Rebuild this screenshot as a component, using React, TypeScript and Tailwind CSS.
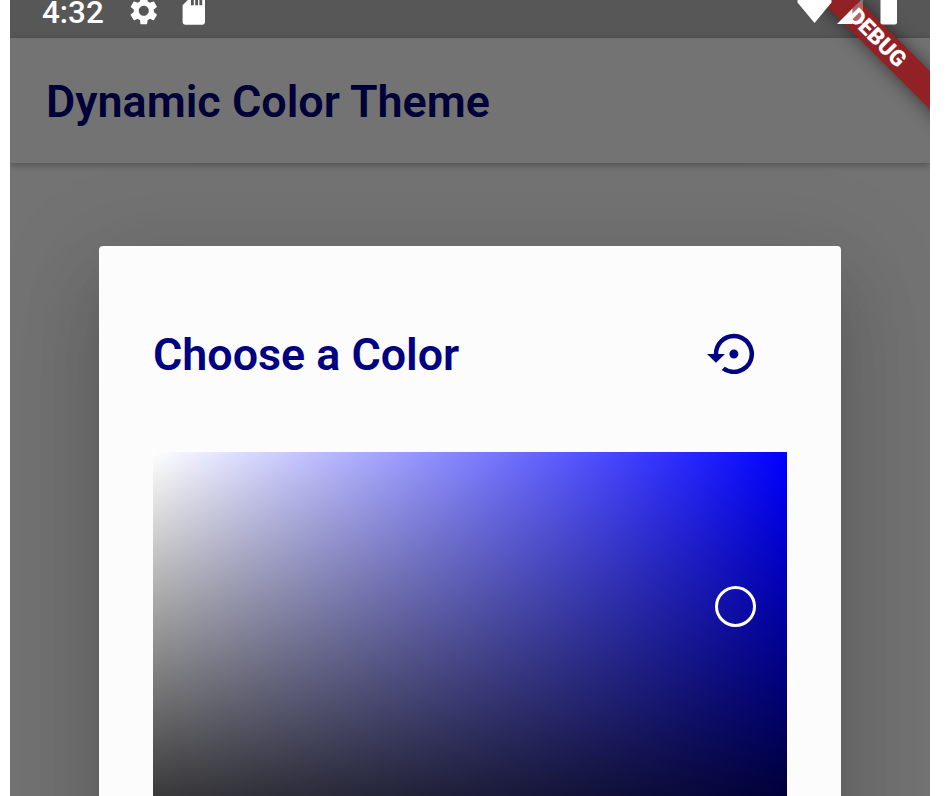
import { MdSdCard, MdSettings, MdSettingsBackupRestore } from "react-icons/md";

function StatusBar() {
  return (
    <div className="-mt-4 flex h-[54px] shrink-0 items-center bg-[#575757] text-white">
      <span className="ml-8 w-[85px] pt-[3px] text-[31.4px] leading-none font-medium">4:32</span>
      <MdSettings className="size-[33.6px] shrink-0" />
      <MdSdCard className="ml-4 size-[33.6px] shrink-0" />
      <svg
        className="relative z-20 ml-auto h-[54px] w-[134px] shrink-0"
        viewBox="796 -16 134 54"
        fill="white"
      >
        <path d="M814.5 23L797.5 2.5Q797 -12 814.5 -12T831.5 2.5Z" />
        <path d="M837 24L852.5 8.5V24Z" />
        <path d="M852.5 8.5L863 -2V24H852.5Z" opacity="0.3" />
        <rect x="880.5" y="-6" width="16.5" height="30.5" rx="2" />
      </svg>
    </div>
  );
}

function DebugBanner() {
  return (
    <div className="absolute top-[24px] left-[716.5px] z-10 flex h-[27px] w-[300px] rotate-45 items-center justify-center bg-[#922125] shadow-[0_0_18px_rgba(0,0,0,0.55)]">
      <span className="ml-px text-[22.4px] leading-none font-black text-white">DEBUG</span>
    </div>
  );
}

function ColorDialog() {
  return (
    <section className="mt-[83px] ml-[89px] h-[900px] w-[741.5px] shrink-0 rounded-[4px] bg-[#fcfcfc] px-[54px] shadow-[0_25px_34px_-16px_rgba(0,0,0,0.17),0_54px_85px_7px_rgba(0,0,0,0.11),0_20px_103px_18px_rgba(0,0,0,0.09)]">
      <header className="flex h-[206px] items-center justify-between pt-[9px] pr-[26px] text-[#000080]">
        <h2 className="pt-1 text-[44.8px] leading-none font-semibold">Choose a Color</h2>
        <MdSettingsBackupRestore className="size-[53.8px]" />
      </header>
      <div className="h-[444px] w-[634px] bg-[linear-gradient(to_top,#000,transparent),linear-gradient(to_right,#fff,#00f)] pt-[134px] pl-[561.5px]">
        <div className="size-[41px] rounded-full border-[3px] border-white" />
      </div>
    </section>
  );
}

export default function App() {
  return (
    <div className="h-[796px] w-[950px] overflow-hidden bg-white px-[10px] font-[Roboto,sans-serif]">
      <main className="relative mr-[10px] flex h-[796px] w-[920px] flex-col overflow-hidden bg-[#737373]">
        <StatusBar />
        <header className="flex h-[125px] shrink-0 items-center bg-[#737373] pl-9 shadow-[0_2px_7px_rgba(0,0,0,0.3)]">
          <h1 className="pt-1 text-[44.9px] leading-none font-semibold text-[#000038]">
            Dynamic Color Theme
          </h1>
        </header>
        <ColorDialog />
        <DebugBanner />
      </main>
    </div>
  );
}
